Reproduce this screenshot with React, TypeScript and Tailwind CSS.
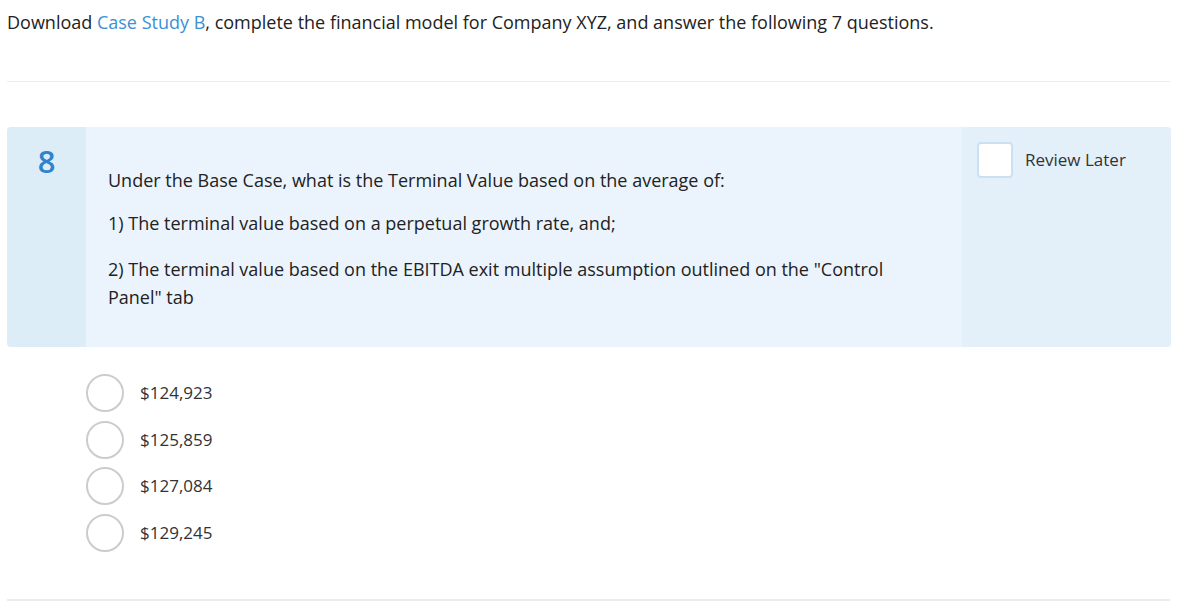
import React from "react";

const options = ["$124,923", "$125,859", "$127,084", "$129,245"];

export default function App() {
    return (
        <div className="min-h-screen bg-white px-[7px] text-[#222] font-['Open_Sans',sans-serif]">
            <p className="pt-[9px] text-[18px] leading-[26px]">
                Download <a className="text-[#3a91d6]">Case Study B</a>, complete the financial model for Company XYZ, and answer the following 7 questions.
            </p>
            <div className="mt-[46px] mr-[18px] h-px bg-[#ececec]"></div>

            <div className="mt-[45px] mr-[17px] flex rounded bg-[#ebf4fc] overflow-hidden">
                <div className="w-[79px] shrink-0 bg-[#dcedf8] pt-[14px] text-center text-[31px] font-semibold leading-[40px] text-[#2d83cc]">
                    8
                </div>
                <div className="flex-1 pl-[22px] pr-[22px] pt-[39px] pb-[36px] text-[18px] leading-[28px]">
                    <p className="mb-[15px]">Under the Base Case, what is the Terminal Value based on the average of:</p>
                    <p className="mb-[18px]">1) The terminal value based on a perpetual growth rate, and;</p>
                    <p>2) The terminal value based on the EBITDA exit multiple assumption outlined on the "Control Panel" tab</p>
                </div>
                <div className="w-[209px] shrink-0 bg-[#e3f0fa] pl-[15px] pt-[15px]">
                    <label className="flex items-center gap-3">
                        <span className="h-9 w-9 rounded border-2 border-[#c9e1f3] bg-white"></span>
                        <span className="text-[17px] text-[#333]">Review Later</span>
                    </label>
                </div>
            </div>

            <div className="mt-[27px] flex flex-col gap-[8.5px] pl-[79px]">
                {options.map((o) => (
                    <label key={o} className="flex items-center gap-4">
                        <span className="h-[38px] w-[38px] rounded-full border-2 border-[#cccccc] bg-white"></span>
                        <span className="text-[17px] text-[#333]">{o}</span>
                    </label>
                ))}
            </div>

            <div className="mt-[47px] mr-[18px] h-[2px] bg-[#ececec]"></div>
        </div>
    );
}
